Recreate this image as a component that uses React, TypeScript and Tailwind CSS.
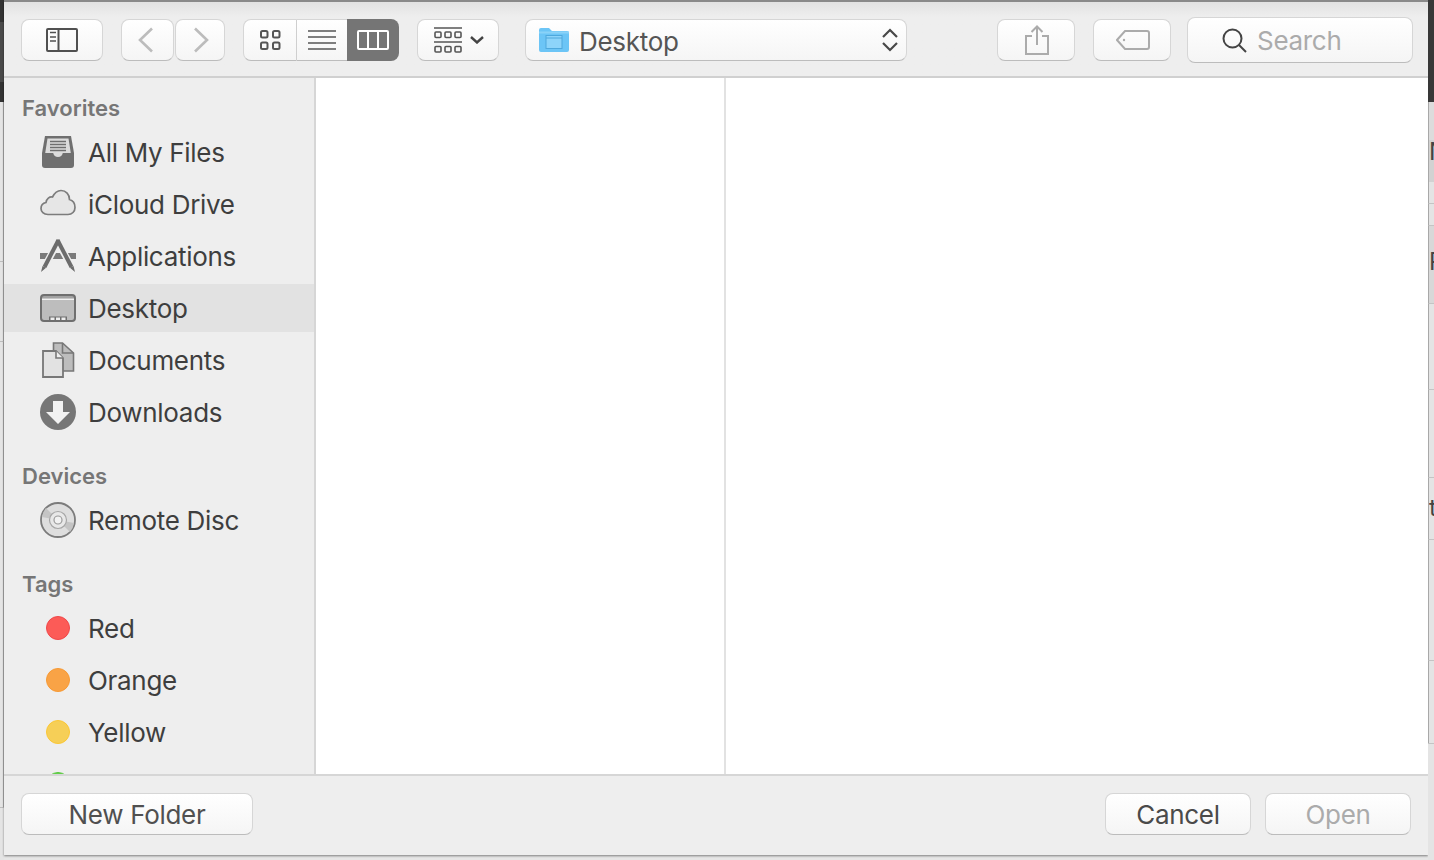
import React from 'react';

const btn = 'flex items-center justify-center border border-[#d6d6d6] border-b-[#bcbcbc] bg-gradient-to-b from-white to-[#f5f5f5]';
const label = 'text-[26px] tracking-[-0.3px]';

// Slices of the page that stays visible behind the sheet
const Backdrop: React.FC<{ rows: { h: string; cls?: string; text?: string }[]; side: 'left' | 'right' }> = ({ rows, side }) => (
  <div className={`flex flex-col overflow-hidden bg-[#e4e4e4] ${side === 'left' ? 'w-[4px] shrink-0' : 'w-[6px] shrink-0'}`}>
    {rows.map((r, i) => (
      <div key={i} className={`shrink-0 overflow-hidden ${r.h} ${r.cls ?? ''}`}>
        {r.text && <span className="block text-[24px] leading-[1] text-[#444]">{r.text}</span>}
      </div>
    ))}
  </div>
);

const leftRows = [
  { h: 'h-[22px]', cls: 'bg-[#333333]' },
  { h: 'h-[60px]', cls: 'bg-[#4a4a4a]' },
  { h: 'h-[20px]', cls: 'bg-[#333333]' },
  { h: 'h-[159px]', cls: 'border-r border-[#a8a8a8]' },
  { h: 'h-[80px]', cls: 'border-t border-[#bdbdbd] border-r-1 border-r-[#a8a8a8]' },
  { h: 'h-[466px]', cls: 'border-t border-[#bdbdbd] border-r-1 border-r-[#a8a8a8]' },
  { h: 'h-[53px]', cls: 'border-t border-[#bdbdbd]' },
];

const rightRows = [
  { h: 'h-[102px]', cls: 'bg-[#383838]' },
  { h: 'h-[38px]', cls: 'bg-[#dcdcdc] border-l border-[#a8a8a8]' },
  { h: 'h-[42px]', cls: 'bg-[#d2d2d2] border-l border-[#a8a8a8]', text: 'N' },
  { h: 'h-[21px]', cls: 'border-l border-[#a8a8a8]' },
  { h: 'h-[22px]', cls: 'border-t border-[#c4c4c4] border-l border-l-[#a8a8a8]' },
  { h: 'h-[78px]', cls: 'bg-[#d8d8d8] border-t border-[#c4c4c4] border-l border-l-[#a8a8a8] pt-[24px]', text: 'P' },
  { h: 'h-[86px]', cls: 'border-t border-[#c4c4c4] border-l border-l-[#a8a8a8]' },
  { h: 'h-[88px]', cls: 'border-t border-[#c4c4c4] border-l border-l-[#a8a8a8]' },
  { h: 'h-[62px]', cls: 'border-t border-[#c4c4c4] border-l border-l-[#a8a8a8] pt-[18px]', text: 't' },
  { h: 'h-[121px]', cls: 'border-t border-[#c4c4c4] border-l border-l-[#a8a8a8]' },
  { h: 'h-[83px]', cls: 'border-t border-[#c4c4c4] border-l border-l-[#a8a8a8]' },
  { h: 'h-[117px]', cls: 'border-t border-[#c4c4c4]' },
];

const AllFilesIcon = () => (
  <svg width="36" height="36" viewBox="0 0 36 36">
    <path d="M5 2h26l3 17v12a3 3 0 0 1-3 3H5a3 3 0 0 1-3-3V19z" fill="#6f6f6f" />
    <path d="M7.500 4.500h21l2.300 14.500h-8c-.6 2.800-2.200 4-4.800 4s-4.200-1.200-4.800-4h-8z" fill="#dcdcdc" />
    <path d="M10 7.500h16M10 10.500h16M10 13.500h16M10 16.500h16" stroke="#6f6f6f" strokeWidth="1.400" />
  </svg>
);

const CloudIcon = () => (
  <svg width="36" height="36" viewBox="0 0 36 36">
    <path d="M8 28.500C3.500 28.500 1 25.500 1 22.500 1 19 3.500 17 6 16.500 6.500 12.500 9.500 10.500 12.500 11 14.500 7 17.500 4.500 21 4.500 26 4.500 29.500 8.500 29.500 13.500 33 14.500 35 18 35 21.500 35 25.500 32 28.500 28 28.500Z" fill="#e6e6e6" stroke="#7c7c7c" strokeWidth="1.700" />
  </svg>
);

const AppsIcon = () => (
  <svg width="36" height="36" viewBox="0 0 36 36">
    <path d="M0 15h36v6H0z" fill="#7a7a7a" />
    <path d="M4 30L18.500 3M32 30L17.500 3" stroke="#eeeeee" strokeWidth="7" />
    <path d="M4.500 29L18.500 2" stroke="#6c6c6c" strokeWidth="4" />
    <path d="M31.500 29L17.500 2" stroke="#6c6c6c" strokeWidth="4" />
    <path d="M2.500 28l3.600 1.800L1 34zM33.500 28l-3.600 1.800L35 34z" fill="#6c6c6c" />
  </svg>
);

const DesktopIcon = () => (
  <svg width="36" height="36" viewBox="0 0 36 36">
    <rect x="1" y="5" width="34" height="26" rx="3" fill="#bdbdbd" stroke="#6f6f6f" strokeWidth="2" />
    <path d="M2 8.500h32v1.500H2z" fill="#f2f2f2" />
    <path d="M2 6h32v2.500H2z" fill="#6f6f6f" opacity="0.35" />
    <path d="M9 26.500h18V30H9z" fill="#6f6f6f" />
    <path d="M10.500 27.500h4v2.500h-4zM16 27.500h4v2.500h-4zM21.500 27.500h4v2.500h-4z" fill="#eeeeee" />
  </svg>
);

const DocsIcon = () => (
  <svg width="36" height="36" viewBox="0 0 36 36">
    <path d="M13.500 1h9l11 10v18H13.500z" fill="#bdbdbd" stroke="#777" strokeWidth="1.600" />
    <path d="M22.500 1v10h11" fill="none" stroke="#777" strokeWidth="1.600" />
    <path d="M3 9h13l7 7v19H3z" fill="#e2e2e2" stroke="#777" strokeWidth="1.800" />
    <path d="M16 9v7h7" fill="#eeeeee" stroke="#777" strokeWidth="1.600" />
  </svg>
);

const DownloadsIcon = () => (
  <svg width="36" height="36" viewBox="0 0 36 36">
    <circle cx="18" cy="18" r="18" fill="#767676" />
    <path d="M13 7h10v11h7L18 30 6 18h7z" fill="#f2f2f2" />
  </svg>
);

const DiscIcon = () => (
  <svg width="36" height="36" viewBox="0 0 36 36">
    <circle cx="18" cy="18" r="17" fill="#dedede" stroke="#7c7c7c" strokeWidth="1.800" />
    <path d="M18 18L6 6a17 17 0 0 0-4 9zM18 18l12 12a17 17 0 0 0 4-9z" fill="#c4c4c4" />
    <circle cx="18" cy="18" r="8.500" fill="#e8e8e8" stroke="#a6a6a6" strokeWidth="1.200" />
    <circle cx="18" cy="18" r="4" fill="#f2f2f2" stroke="#9a9a9a" strokeWidth="1.200" />
  </svg>
);

const TagDot: React.FC<{ cls: string }> = ({ cls }) => <div className={`h-[24px] w-[24px] rounded-full border ${cls}`} />;

const SectionLabel: React.FC<{ children: React.ReactNode }> = ({ children }) => (
  <div className="flex h-[24px] items-center pl-[18px] text-[22px] font-semibold text-[#767676]">{children}</div>
);

const SideRow: React.FC<{ label: string; icon: React.ReactNode; active?: boolean }> = ({ label: text, icon, active }) => (
  <div className={`flex h-[48px] shrink-0 items-center pl-[36px] ${active ? 'bg-[#e2e2e2]' : ''}`}>
    <div className="flex w-[36px] shrink-0 items-center justify-center">{icon}</div>
    <span className={`ml-[12px] block ${label} text-[#3e3e3e]`}>{text}</span>
  </div>
);

function App() {
  return (
    <div className="flex h-[860px] w-[1434px] overflow-hidden bg-[#e6e6e6] font-['Inter',sans-serif]">
      <Backdrop side="left" rows={leftRows} />

      <div className="flex h-[855px] flex-1 flex-col overflow-hidden bg-[#eeeeee] shadow-[0_1px_2px_rgba(0,0,0,0.45)]">
        {/* toolbar */}
        <div className="flex h-[78px] shrink-0 items-center border-b-2 border-[#d0d0d0] border-t-2 border-t-[#8a8a8a] bg-gradient-to-b from-[#e2e2e2] via-[#eeeeee] via-20% to-[#eeeeee] pl-[17px] pr-[15px] pt-[2px]">
          <div className={`${btn} h-[42px] w-[82px] rounded-[8px]`}>
            <svg width="32" height="24" viewBox="0 0 32 24" fill="none" stroke="#505050">
              <rect x="1" y="1" width="30" height="22" rx="1" strokeWidth="2" />
              <path d="M12.500 1v22" strokeWidth="2" />
              <path d="M4 4.500h6M4 9h6M4 13h6" strokeWidth="1.500" />
            </svg>
          </div>

          <div className="ml-[18px] flex">
            <div className={`${btn} h-[42px] w-[53px] rounded-[8px] pr-[4px]`}>
              <svg width="16" height="26" viewBox="0 0 16 26" fill="none" stroke="#bcbcbc" strokeWidth="2.600">
                <path d="M14 1.500L2 13l12 11.500" />
              </svg>
            </div>
            <div className={`${btn} ml-[1px] h-[42px] w-[50px] rounded-[8px] pl-[1px]`}>
              <svg width="16" height="26" viewBox="0 0 16 26" fill="none" stroke="#bcbcbc" strokeWidth="2.600">
                <path d="M2 1.500L14 13 2 24.500" />
              </svg>
            </div>
          </div>

          <div className="ml-[18px] flex">
            <div className={`${btn} h-[42px] w-[54px] rounded-l-[8px] border-r-[#cfcfcf] pl-[2px]`}>
              <svg width="22" height="20" viewBox="0 0 22 20" fill="none" stroke="#555" strokeWidth="2">
                <rect x="1" y="1" width="6.500" height="6.500" rx="1.500" />
                <rect x="13" y="1" width="6.500" height="6.500" rx="1.500" />
                <rect x="1" y="12.500" width="6.500" height="6.500" rx="1.500" />
                <rect x="13" y="12.500" width="6.500" height="6.500" rx="1.500" />
              </svg>
            </div>
            <div className={`${btn} h-[42px] w-[50px] border-l-0 border-r-0`}>
              <svg width="28" height="20" viewBox="0 0 28 20" fill="none" stroke="#555" strokeWidth="1.600">
                <path d="M0 1h28M0 7h28M0 13h28M0 19h28" />
              </svg>
            </div>
            <div className="flex h-[42px] w-[52px] items-center justify-center rounded-r-[8px] bg-[#757575]">
              <svg width="32" height="20" viewBox="0 0 32 20" fill="none" stroke="#ffffff" strokeWidth="2">
                <rect x="1" y="1" width="30" height="18" rx="1" />
                <path d="M11 1v18M21 1v18" />
              </svg>
            </div>
          </div>

          <div className={`${btn} ml-[18px] h-[42px] w-[82px] gap-[8px] rounded-[8px] pl-[2px]`}>
            <svg width="28" height="26" viewBox="0 0 28 26" fill="none" stroke="#555">
              <path d="M0 1h28M0 15h28" strokeWidth="1.500" />
              <rect x="1" y="5" width="6" height="5.500" rx="1" strokeWidth="1.600" />
              <rect x="11" y="5" width="6" height="5.500" rx="1" strokeWidth="1.600" />
              <rect x="21" y="5" width="6" height="5.500" rx="1" strokeWidth="1.600" />
              <rect x="1" y="19.500" width="6" height="5.500" rx="1" strokeWidth="1.600" />
              <rect x="11" y="19.500" width="6" height="5.500" rx="1" strokeWidth="1.600" />
              <rect x="21" y="19.500" width="6" height="5.500" rx="1" strokeWidth="1.600" />
            </svg>
            <svg width="14" height="8" viewBox="0 0 14 8" fill="none" stroke="#444" strokeWidth="2.400">
              <path d="M1 1l6 5.500L13 1" />
            </svg>
          </div>

          <div className={`${btn} ml-[26px] h-[42px] w-[382px] justify-start rounded-[8px] pl-[13px] pr-[8px]`}>
            <svg width="30" height="24" viewBox="0 0 30 24">
              <path d="M0 2a2 2 0 0 1 2-2h8l3 3h15a2 2 0 0 1 2 2v17a2 2 0 0 1-2 2H2a2 2 0 0 1-2-2z" fill="#6cc5f6" />
              <path d="M0 3.500h30v2H0z" fill="#8ad2f8" />
              <rect x="7" y="7.500" width="16" height="13" fill="#8dd4fa" stroke="#4ea8dc" strokeWidth="1" />
              <path d="M7 10h16" stroke="#4ea8dc" strokeWidth="1" />
            </svg>
            <span className={`ml-[10px] block flex-1 pt-[2px] ${label} text-[#555555]`}>Desktop</span>
            <svg width="16" height="24" viewBox="0 0 16 24" fill="none" stroke="#484848" strokeWidth="2.200">
              <path d="M1 9l7-7 7 7M1 15l7 7 7-7" />
            </svg>
          </div>

          <div className={`${btn} ml-[90px] h-[42px] w-[78px] rounded-[8px] pl-[2px]`}>
            <svg width="24" height="30" viewBox="0 0 24 30" fill="none" stroke="#ababab" strokeWidth="2">
              <path d="M7 11H1v18h22V11h-6M12 20V2M6.500 7L12 1.500 17.500 7" />
            </svg>
          </div>

          <div className={`${btn} ml-[18px] h-[42px] w-[78px] rounded-[8px] pl-[2px]`}>
            <svg width="34" height="20" viewBox="0 0 34 20" fill="none" stroke="#ababab" strokeWidth="2">
              <path d="M9 1h22a2 2 0 0 1 2 2v14a2 2 0 0 1-2 2H9l-8-9z" />
              <circle cx="8" cy="10" r="1.200" fill="#ababab" stroke="none" />
            </svg>
          </div>

          <div className={`${btn} ml-[16px] h-[46px] w-[226px] justify-start rounded-[8px] pl-[34px]`}>
            <svg width="25" height="25" viewBox="0 0 25 25" fill="none" stroke="#444" strokeWidth="2">
              <circle cx="10.500" cy="10.500" r="9" />
              <path d="M17 17l7 7" />
            </svg>
            <span className={`ml-[10px] block ${label} text-[#ababab]`}>Search</span>
          </div>
        </div>

        {/* browser body */}
        <div className="flex min-h-0 flex-1 bg-white">
          <div className="flex w-[312px] shrink-0 flex-col overflow-hidden border-r-2 border-[#d6d6d6] bg-[#eeeeee] pt-[18px]">
            <SectionLabel>Favorites</SectionLabel>
            <div className="mt-[8px] flex flex-col gap-[4px]">
              <SideRow label="All My Files" icon={<AllFilesIcon />} />
              <SideRow label="iCloud Drive" icon={<CloudIcon />} />
              <SideRow label="Applications" icon={<AppsIcon />} />
              <SideRow label="Desktop" icon={<DesktopIcon />} active />
              <SideRow label="Documents" icon={<DocsIcon />} />
              <SideRow label="Downloads" icon={<DownloadsIcon />} />
            </div>
            <div className="mt-[28px]">
              <SectionLabel>Devices</SectionLabel>
            </div>
            <div className="mt-[8px]">
              <SideRow label="Remote Disc" icon={<DiscIcon />} />
            </div>
            <div className="mt-[28px]">
              <SectionLabel>Tags</SectionLabel>
            </div>
            <div className="mt-[8px] flex flex-col gap-[4px]">
              <SideRow label="Red" icon={<TagDot cls="border-[#f0474a] bg-[#fc5b57]" />} />
              <SideRow label="Orange" icon={<TagDot cls="border-[#f79a35] bg-[#f9a346]" />} />
              <SideRow label="Yellow" icon={<TagDot cls="border-[#fbc735] bg-[#f6cf57]" />} />
              <SideRow label="Green" icon={<TagDot cls="border-[#58c83f] bg-[#66d04e]" />} />
            </div>
          </div>
          <div className="w-[410px] shrink-0 border-r-2 border-[#e2e2e2]" />
          <div className="flex-1" />
        </div>

        {/* footer */}
        <div className="flex h-[81px] shrink-0 items-center border-t-2 border-[#d6d6d6] px-[17px] pb-[4px]">
          <div className={`${btn} h-[42px] w-[232px] rounded-[8px] pt-[2px] ${label} text-[#505050]`}>New Folder</div>
          <div className={`${btn} ml-auto h-[42px] w-[146px] rounded-[8px] pt-[2px] ${label} text-[#4a4a4a]`}>Cancel</div>
          <div className={`${btn} ml-[14px] h-[42px] w-[146px] rounded-[8px] pt-[2px] ${label} text-[#ababab]`}>Open</div>
        </div>
      </div>

      <Backdrop side="right" rows={rightRows} />
    </div>
  );
}

export default App;
